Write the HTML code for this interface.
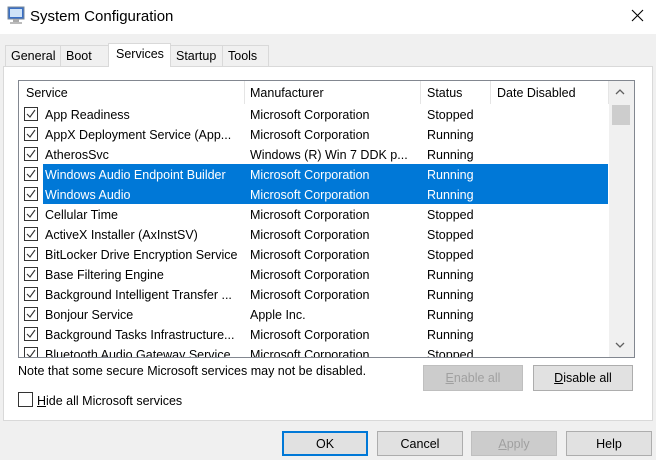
<!DOCTYPE html>
<html><head><meta charset="utf-8"><style>
*{margin:0;padding:0;box-sizing:border-box}
body{width:656px;height:460px;background:#f0f0f0;font-family:"Liberation Sans",sans-serif;font-size:12px;color:#000;position:relative;overflow:hidden}
.abs{position:absolute}
.title{left:0;top:0;width:656px;height:34px;background:#fff}
.tab{position:absolute;top:45px;height:21px;border:1px solid #d9d9d9;border-bottom:none;background:#f0f0f0;padding:3px 5px 0;font-size:12.5px}
.panel{left:3px;top:66px;width:650px;height:355px;background:#fff;border:1px solid #d9d9d9}
.list{left:18px;top:80px;width:617px;height:278px;border:1px solid #828790;background:#fff;overflow:hidden}
.hdr{position:absolute;top:0;height:24px;font-size:12.5px;padding-top:5px}
.sep{position:absolute;top:0;width:1px;height:23px;background:#e5e5e5}
.row{position:absolute;left:0;width:590px;height:20px;font-size:12.5px}
.row span{position:absolute;top:4px;white-space:nowrap}
.cb{position:absolute;left:5px;top:3px;width:14px;height:14px;border:1px solid #333;background:#fff}
.cb svg{position:absolute;left:1px;top:1px}
.sel{position:absolute;left:24px;width:565px;height:20px;background:#0078d7}
.btn{position:absolute;border:1px solid #adadad;background:#e1e1e1;text-align:center;font-size:12.5px;padding-top:5px}
.dis{color:#a0a0a0;background:#cccccc;border-color:#bfbfbf}
</style></head><body>
<div class="abs title"></div>
<svg class="abs" style="left:7px;top:6px" width="18" height="20" viewBox="0 0 18 20"><rect x="1" y="1" width="16" height="12" fill="#3a6fc4" stroke="#7a8a9a"/><rect x="3" y="3" width="12" height="8" fill="#cfe3f7"/><rect x="6" y="13" width="6" height="3" fill="#aaa"/><rect x="3" y="16" width="12" height="2" fill="#bbb"/></svg>
<div class="abs" style="left:30px;top:8px;font-size:15px">System Configuration</div>
<svg class="abs" style="left:631px;top:9px" width="13" height="13"><path d="M1 1L12 12M12 1L1 12" stroke="#000" stroke-width="1.1"/></svg>
<div class="abs panel"></div>
<div class="tab" style="left:5px;width:56px">General</div>
<div class="tab" style="left:60px;width:49px">Boot</div>
<div class="tab" style="left:170px;width:53px">Startup</div>
<div class="tab" style="left:222px;width:47px">Tools</div>
<div class="tab" style="left:108px;top:43px;height:24px;width:63px;background:#fff;padding-left:7px;border-color:#d9d9d9">Services</div>
<div class="abs list">
<div class="hdr" style="left:7px">Service</div>
<div class="sep" style="left:225px"></div>
<div class="hdr" style="left:231px">Manufacturer</div>
<div class="sep" style="left:401px"></div>
<div class="hdr" style="left:408px">Status</div>
<div class="sep" style="left:471px"></div>
<div class="hdr" style="left:478px">Date Disabled</div>
<div class="sep" style="left:589px"></div>
<div style="position:absolute;left:590px;top:0;width:26px;height:277px;background:#f0f0f0"></div>
<svg style="position:absolute;left:596px;top:7px" width="10" height="7"><path d="M1 6L5 2L9 6" stroke="#606060" fill="none" stroke-width="1.3"/></svg>
<div style="position:absolute;left:593px;top:24px;width:18px;height:20px;background:#cdcdcd"></div>
<svg style="position:absolute;left:596px;top:261px" width="10" height="7"><path d="M1 1L5 5L9 1" stroke="#606060" fill="none" stroke-width="1.3"/></svg>
<div class="sel" style="top:83px"></div>
<div class="sel" style="top:103px"></div>
<div id="rows"></div>
</div>
<div class="abs" style="left:18px;top:364px;font-size:12.5px">Note that some secure Microsoft services may not be disabled.</div>
<div class="btn dis" style="left:423px;top:365px;width:100px;height:26px"><u>E</u>nable all</div>
<div class="btn" style="left:533px;top:365px;width:100px;height:26px"><u>D</u>isable all</div>
<div class="abs" style="left:18px;top:392px;width:15px;height:15px;border:1px solid #333;background:#fff"></div>
<div class="abs" style="left:37px;top:394px;font-size:12.5px"><u>H</u>ide all Microsoft services</div>
<div class="btn" style="left:282px;top:431px;width:86px;height:25px;border:2px solid #0078d7;padding-top:4px">OK</div>
<div class="btn" style="left:377px;top:431px;width:86px;height:25px">Cancel</div>
<div class="btn dis" style="left:471px;top:431px;width:86px;height:25px"><u>A</u>pply</div>
<div class="btn" style="left:566px;top:431px;width:86px;height:25px">Help</div>
<script>
var d=[["App Readiness","Microsoft Corporation","Stopped"],["AppX Deployment Service (App...","Microsoft Corporation","Running"],["AtherosSvc","Windows (R) Win 7 DDK p...","Running"],["Windows Audio Endpoint Builder","Microsoft Corporation","Running"],["Windows Audio","Microsoft Corporation","Running"],["Cellular Time","Microsoft Corporation","Stopped"],["ActiveX Installer (AxInstSV)","Microsoft Corporation","Stopped"],["BitLocker Drive Encryption Service","Microsoft Corporation","Stopped"],["Base Filtering Engine","Microsoft Corporation","Running"],["Background Intelligent Transfer ...","Microsoft Corporation","Running"],["Bonjour Service","Apple Inc.","Running"],["Background Tasks Infrastructure...","Microsoft Corporation","Running"],["Bluetooth Audio Gateway Service","Microsoft Corporation","Stopped"]];
var h="";d.forEach(function(r,i){var c=(i==3||i==4)?"color:#fff;":"";h+='<div class="row" style="top:'+(23+i*20)+'px"><div class="cb"><svg width="10" height="10"><path d="M1 5L4 8L9 1" stroke="#333" fill="none" stroke-width="1.1"/></svg></div><span style="left:26px;'+c+'">'+r[0]+'</span><span style="left:231px;'+c+'">'+r[1]+'</span><span style="left:408px;'+c+'">'+r[2]+'</span></div>'});
document.getElementById("rows").innerHTML=h;
</script>
</body></html>
